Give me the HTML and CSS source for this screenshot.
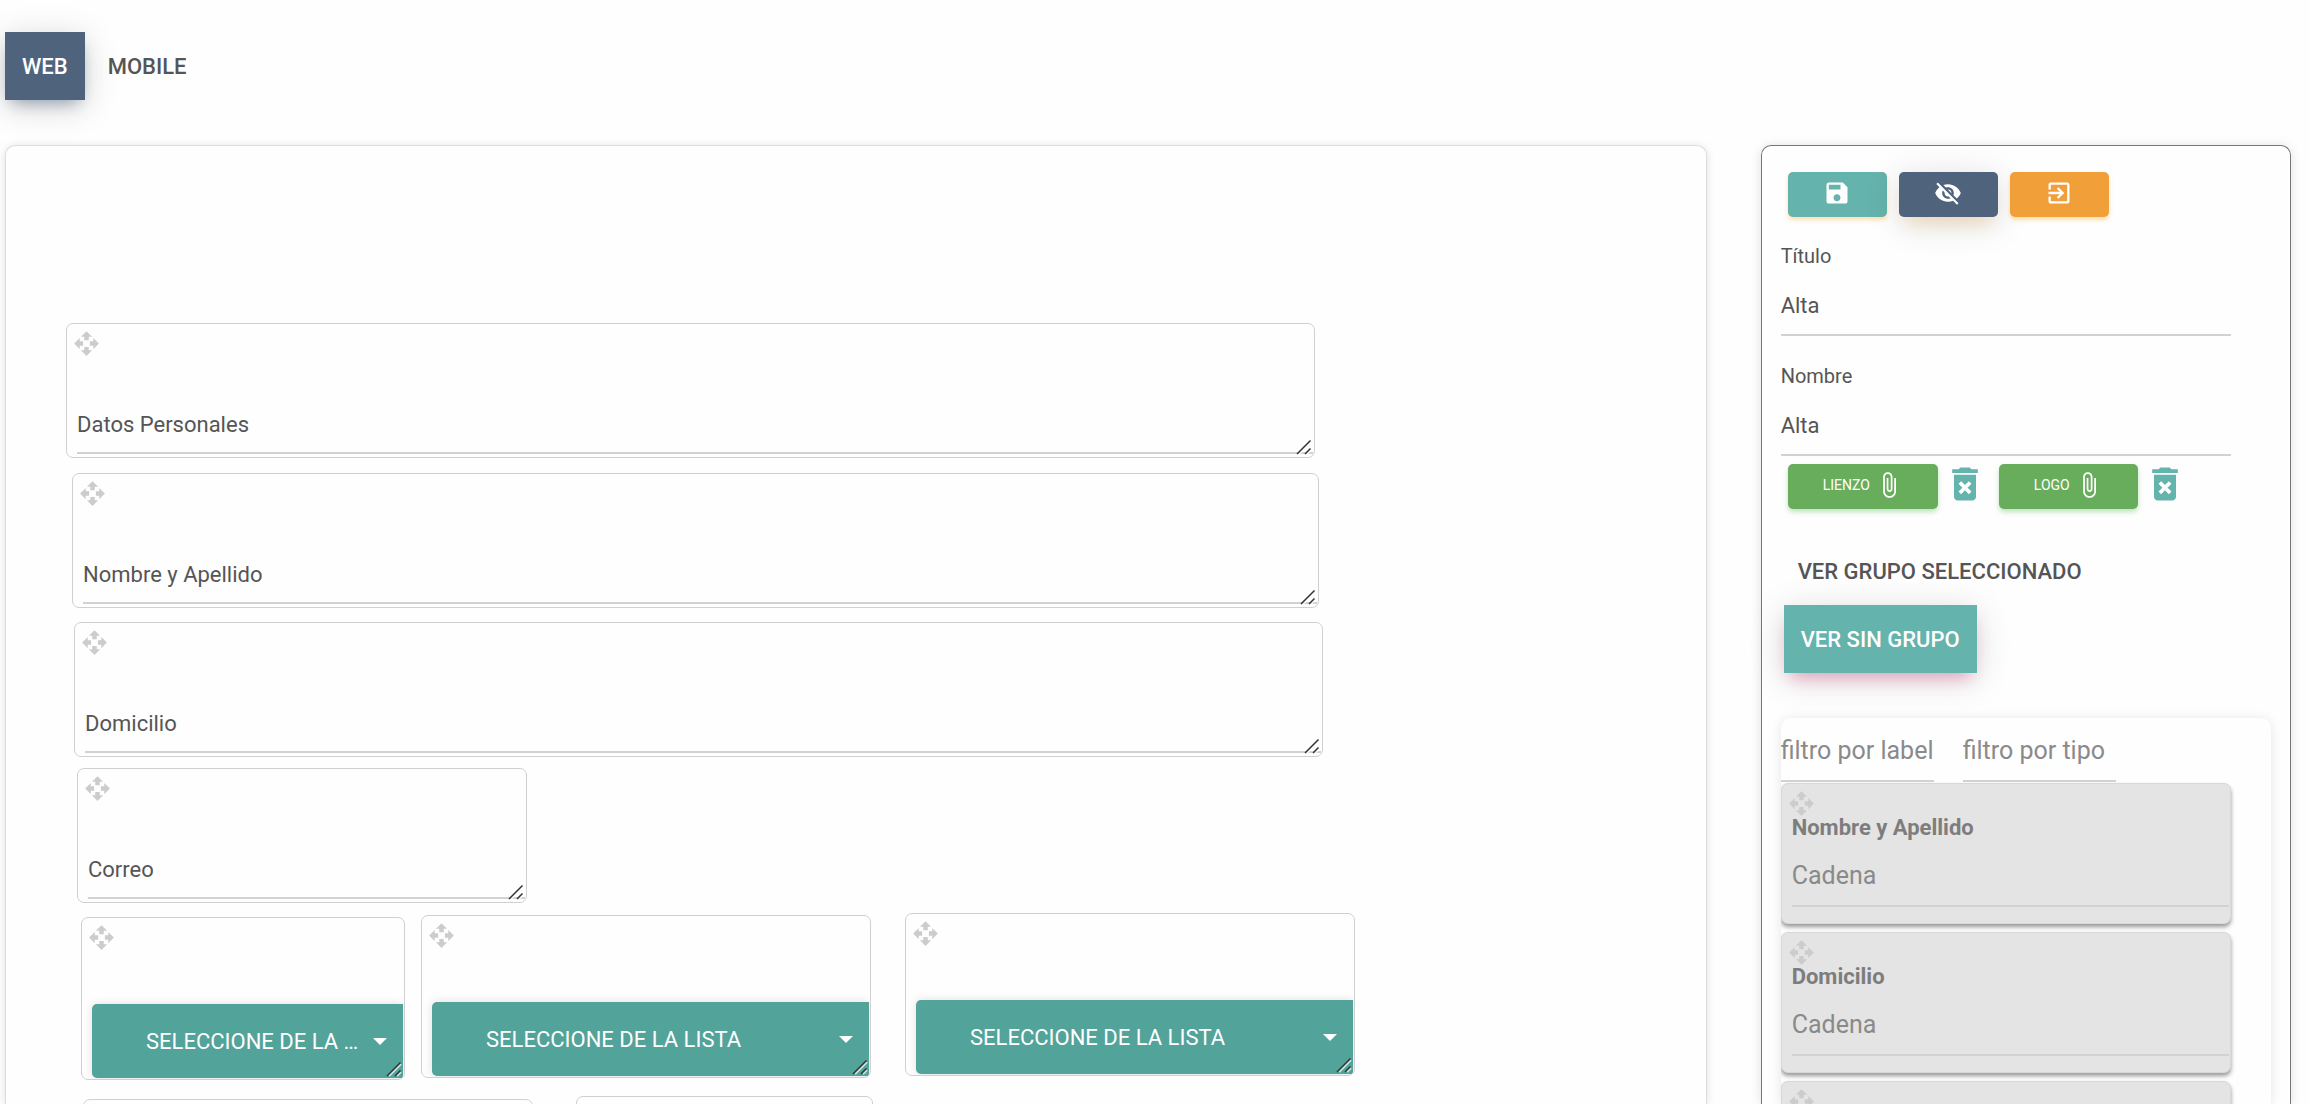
FILE: index.html
```html
<!DOCTYPE html>
<html lang="es">
<head>
    <meta charset="UTF-8">
    <meta name="viewport" content="width=device-width, initial-scale=1.0">
    <title>Editor de formulario</title>
    <link rel="stylesheet" href="styles.css">
</head>
<body>
    <!-- shared icons -->
    <svg class="sprite" aria-hidden="true">
        <symbol id="move" viewBox="0 0 24 24"><path d="M10 9h4V6h3l-5-5-5 5h3v3zm-1 1H6V7l-5 5 5 5v-3h3v-4zm14 2l-5-5v3h-3v4h3v3l5-5zm-9 3h-4v3H7l5 5 5-5h-3v-3z"/></symbol>
        <symbol id="clip" viewBox="0 0 24 24"><path d="M16.5 6v11.5c0 2.21-1.79 4-4 4s-4-1.79-4-4V5c0-1.38 1.12-2.5 2.5-2.5s2.5 1.12 2.5 2.5v10.5c0 .55-.45 1-1 1s-1-.45-1-1V6H10v9.500c0 1.38 1.12 2.500 2.500 2.500s2.500-1.120 2.500-2.500V5c0-2.210-1.790-4-4-4S7 2.790 7 5v12.500c0 3.040 2.460 5.500 5.500 5.500s5.500-2.460 5.500-5.500V6h-1.500z"/></symbol>
        <symbol id="trash" viewBox="0 0 24 24"><path d="M6 19c0 1.1.9 2 2 2h8c1.100 0 2-.9 2-2V7H6v12zm2.460-7.120l1.410-1.410L12 12.590l2.120-2.120 1.410 1.410L13.410 14l2.120 2.120-1.410 1.410L12 15.410l-2.120 2.120-1.410-1.410L10.590 14l-2.130-2.120zM15.500 4l-1-1h-5l-1 1H5v2h14V4z"/></symbol>
        <symbol id="grip" viewBox="0 0 16 16"><path class="grip-light" d="M3 15L15 3M11 15L15 11"/><path class="grip-dark" d="M1 15L14.500 1.500M9 15L14.500 9.500"/></symbol>
    </svg>

    <div class="tabs">
        <button class="tab tab-web">WEB</button>
        <button class="tab">MOBILE</button>
    </div>

    <div class="editor">
        <main class="canvas">
            <div class="item item-datos">
                <svg class="move"><use href="#move"/></svg>
                <input class="line-input" type="text" value="Datos Personales" aria-label="Datos Personales">
                <svg class="grip"><use href="#grip"/></svg>
            </div>
            <div class="item item-nombre">
                <svg class="move"><use href="#move"/></svg>
                <input class="line-input" type="text" value="Nombre y Apellido" aria-label="Nombre y Apellido">
                <svg class="grip"><use href="#grip"/></svg>
            </div>
            <div class="item item-domicilio">
                <svg class="move"><use href="#move"/></svg>
                <input class="line-input" type="text" value="Domicilio" aria-label="Domicilio">
                <svg class="grip"><use href="#grip"/></svg>
            </div>
            <div class="item item-correo">
                <svg class="move"><use href="#move"/></svg>
                <input class="line-input" type="text" value="Correo" aria-label="Correo">
                <svg class="grip"><use href="#grip"/></svg>
            </div>
            <div class="item item-lista item-lista1">
                <svg class="move"><use href="#move"/></svg>
                <select class="list-select" aria-label="Lista 1"><option>SELECCIONE DE LA LISTA</option></select>
                <svg class="caret" viewBox="0 0 14 7"><path d="M0 0h14L7 7z"/></svg>
                <svg class="grip"><use href="#grip"/></svg>
            </div>
            <div class="item item-lista item-lista2">
                <svg class="move"><use href="#move"/></svg>
                <select class="list-select" aria-label="Lista 2"><option>SELECCIONE DE LA LISTA</option></select>
                <svg class="caret" viewBox="0 0 14 7"><path d="M0 0h14L7 7z"/></svg>
                <svg class="grip"><use href="#grip"/></svg>
            </div>
            <div class="item item-lista item-lista3">
                <svg class="move"><use href="#move"/></svg>
                <select class="list-select" aria-label="Lista 3"><option>SELECCIONE DE LA LISTA</option></select>
                <svg class="caret" viewBox="0 0 14 7"><path d="M0 0h14L7 7z"/></svg>
                <svg class="grip"><use href="#grip"/></svg>
            </div>
            <div class="item item-extra1"></div>
            <div class="item item-extra2"></div>
        </main>

        <aside class="panel">
            <div class="actions">
                <button class="btn btn-save" aria-label="Guardar"><svg viewBox="0 0 24 24"><path d="M17 3H5c-1.110 0-2 .9-2 2v14c0 1.100.890 2 2 2h14c1.100 0 2-.9 2-2V7l-4-4zm-5 16c-1.660 0-3-1.340-3-3s1.340-3 3-3 3 1.340 3 3-1.340 3-3 3zm3-10H5V5h10v4z"/></svg></button>
                <button class="btn btn-hide" aria-label="Ocultar"><svg viewBox="0 0 24 24"><path d="M12 7c2.760 0 5 2.240 5 5 0 .650-.130 1.260-.360 1.830l2.920 2.920c1.510-1.260 2.700-2.890 3.430-4.750-1.730-4.390-6-7.500-11-7.500-1.400 0-2.740.250-3.980.700l2.160 2.160C10.740 7.130 11.350 7 12 7zM2 4.270l2.280 2.280.460.460C3.080 8.300 1.780 10.020 1 12c1.730 4.390 6 7.500 11 7.500 1.550 0 3.030-.300 4.380-.840l.420.420L19.730 22 21 20.730 3.270 3 2 4.270zM7.530 9.800l1.550 1.550c-.050.210-.080.430-.080.650 0 1.660 1.340 3 3 3 .220 0 .440-.030.650-.080l1.550 1.550c-.670.330-1.410.530-2.200.530-2.760 0-5-2.240-5-5 0-.790.200-1.530.530-2.200zm4.310-.780l3.150 3.150.020-.160c0-1.660-1.340-3-3-3l-.170.010z"/></svg></button>
                <button class="btn btn-exit" aria-label="Salir"><svg viewBox="0 0 24 24"><path d="M10.090 15.590L11.500 17l5-5-5-5-1.410 1.410L12.670 11H3v2h9.670l-2.580 2.590zM19 3H5c-1.110 0-2 .9-2 2v4h2V5h14v14H5v-4H3v4c0 1.100.890 2 2 2h14c1.100 0 2-.9 2-2V5c0-1.100-.9-2-2-2z"/></svg></button>
            </div>

            <label class="field-label" for="titulo">Título</label>
            <input class="line-input" type="text" id="titulo" value="Alta">
            <label class="field-label" for="nombre">Nombre</label>
            <input class="line-input" type="text" id="nombre" value="Alta">

            <div class="files">
                <button class="btn btn-file">LIENZO <svg><use href="#clip"/></svg></button>
                <button class="trash" aria-label="Borrar lienzo"><svg><use href="#trash"/></svg></button>
                <button class="btn btn-file">LOGO <svg><use href="#clip"/></svg></button>
                <button class="trash" aria-label="Borrar logo"><svg><use href="#trash"/></svg></button>
            </div>

            <div class="groups">
                <button class="tab">VER GRUPO SELECCIONADO</button>
                <button class="tab tab-group">VER SIN GRUPO</button>
            </div>

            <div class="list">
                <div class="filters">
                    <input class="line-input filter" type="text" placeholder="filtro por label" aria-label="filtro por label">
                    <input class="line-input filter" type="text" placeholder="filtro por tipo" aria-label="filtro por tipo">
                </div>
                <div class="card">
                    <svg class="move"><use href="#move"/></svg>
                    <label for="campo1">Nombre y Apellido</label>
                    <input class="line-input" type="text" id="campo1" placeholder="Cadena">
                </div>
                <div class="card">
                    <svg class="move"><use href="#move"/></svg>
                    <label for="campo2">Domicilio</label>
                    <input class="line-input" type="text" id="campo2" placeholder="Cadena">
                </div>
                <div class="card">
                    <svg class="move"><use href="#move"/></svg>
                </div>
            </div>
        </aside>
    </div>
</body>
</html>
```
FILE: styles.css
```css
*{
    box-sizing: border-box;
}
body{
    display: flex;
    flex-direction: column;
    height: 100vh;
    margin: 0;
    padding: 32px 19px 0 5px;
    overflow: hidden;
    background-color: #fefefe;
    color: #555;
    font-family: Roboto, sans-serif;
    font-size: 22px;
}
button, input, select{
    margin: 0;
    border: 0;
    border-radius: 0;
    font: inherit;
    color: inherit;
    background: none;
}
button{
    cursor: pointer;
}
svg{
    display: block;
    fill: currentColor;
}
.sprite{
    position: absolute;
    width: 0;
    height: 0;
}

/* tabs */
.tabs{
    display: flex;
    gap: 6px;
    margin-bottom: 45px;
}
.tab{
    height: 68px;
    padding: 0 17px;
    font-weight: 500;
    white-space: nowrap;
}
.tab-web{
    background-color: #4f637d;
    color: #fff;
    box-shadow: 0 8px 16px -6px rgba(79,99,125,.6), 0 6px 36px rgba(0,0,0,.14);
}
.tab-group{
    margin-left: 3px;
    background-color: #64b3ac;
    color: #fff;
    box-shadow: 0 10px 16px -6px rgba(216,27,96,.35), 0 6px 36px rgba(0,0,0,.14);
}

.editor{
    display: flex;
    flex: 1;
    gap: 54px;
    min-height: 0;
}

.canvas{
    position: relative;
    flex: 1;
    overflow: hidden;
    border: 1px solid #ddd;
    border-bottom: 0;
    border-radius: 10px 10px 0 0;
    box-shadow: 0 1px 8px rgba(0,0,0,.12);
}
.item{
    position: absolute;
    display: flex;
    flex-direction: column;
    justify-content: space-between;
    width: 450px;
    height: 135px;
    padding: 6px 1px 3px 10px;
    overflow: hidden;
    border: 1px solid #d0d0d0;
    border-radius: 7px;
}
.item-datos{ left: 60px; top: 177px; width: 1249px; }
.item-nombre{ left: 66px; top: 327px; width: 1247px; }
.item-domicilio{ left: 68px; top: 476px; width: 1249px; }
.item-correo{ left: 71px; top: 622px; }
.item-lista1{ left: 75px; top: 771px; width: 324px; }
.item-lista2{ left: 415px; top: 769px; }
.item-lista3{ left: 899px; top: 767px; }
.item-extra1{ left: 77px; top: 953px; }
.item-extra2{ left: 570px; top: 950px; width: 297px; }
.item-lista{
    height: 163px;
    padding-bottom: 1px;
}
.item .line-input{
    height: 58px;
}
.move{
    flex: none;
    width: 27px;
    height: 27px;
    margin-left: -4px;
    color: #ccc;
}
.grip{
    position: absolute;
    right: 2px;
    bottom: 2px;
    width: 16px;
    height: 16px;
    fill: none;
}
.grip-dark{
    stroke: #333;
    stroke-width: 1.5;
}
.grip-light{
    stroke: rgba(255,255,255,.7);
    stroke-width: 2;
}
.list-select{
    width: 100%;
    height: 74px;
    padding: 0 40px 0 54px;
    appearance: none;
    border-radius: 5px 0 0 5px;
    background-color: #52a399;
    box-shadow: 0 0 10px rgba(0,0,0,.12);
    color: #fff;
    text-overflow: ellipsis;
}
.caret{
    position: absolute;
    right: 17px;
    bottom: 34px;
    width: 14px;
    height: 7px;
    color: #fff;
    pointer-events: none;
}
.line-input{
    display: block;
    width: 100%;
    height: 60px;
    padding: 0;
    border-bottom: 2px solid #d2d2d2;
    outline: 0;
}
.line-input::placeholder{
    color: #8a8a8a;
    font-size: 25px;
}

/* right panel */
.panel{
    display: flex;
    flex-direction: column;
    width: 23.2%;
    padding: 26px 19px 0;
    border: 1px solid #777;
    border-bottom: 0;
    border-radius: 10px 10px 0 0;
    box-shadow: 0 1px 12px rgba(0,0,0,.12);
}
.panel > *{
    flex: none;
}
.panel > .line-input{
    width: 450px;
}
.actions, .files{
    display: flex;
    gap: 12px;
    padding-left: 7px;
}
.btn{
    display: flex;
    align-items: center;
    justify-content: center;
    width: 99px;
    height: 45px;
    padding: 0 0 4px;
    border-radius: 5px;
    color: #fff;
}
.btn svg{
    width: 28px;
    height: 28px;
}
.btn-save{
    background-color: #64b3ac;
    box-shadow: 0 3px 4px rgba(255,152,0,.3);
}
.btn-hide{
    background-color: #4f637d;
    box-shadow: 0 12px 16px -6px rgba(255,152,0,.2), 0 6px 36px rgba(0,0,0,.14);
}
.btn-exit{
    background-color: #f19f39;
    box-shadow: 0 3px 4px rgba(255,152,0,.3);
}
.field-label{
    height: 24px;
    margin-top: 27px;
    font-size: 20px;
    line-height: 24px;
}
.field-label + .line-input{
    margin-top: 8px;
}
.line-input + .field-label{
    margin-top: 28px;
}
.files{
    gap: 5px;
    margin-top: 8px;
}
.btn-file{
    gap: 5px;
    width: auto;
    padding: 0 35px 4px 35px;
    background-color: #68ad5c;
    box-shadow: 0 3px 5px rgba(76,175,80,.35);
    font-size: 14px;
}
.trash{
    display: flex;
    align-items: center;
    height: 40px;
    margin-right: 7px;
    padding: 0;
    color: #64b3ac;
}
.trash svg{
    width: 44px;
    height: 44px;
}
.groups{
    display: flex;
    flex-direction: column;
    align-items: flex-start;
    margin-top: 28px;
}
.panel .list{
    flex: 1;
    min-height: 0;
    margin-top: 45px;
    overflow: hidden;
    border-radius: 10px 10px 0 0;
    box-shadow: 0 1px 12px rgba(0,0,0,.1);
}
.filters{
    display: flex;
    gap: 29px;
    padding-top: 4px;
}
.filter{
    width: 153px;
}
.card{
    width: 450px;
    height: 141px;
    margin: 1px 0 8px;
    padding: 6px 1px 0 10px;
    border: 1px solid #d8d8d8;
    border-radius: 7px;
    background-color: #e4e4e4;
    box-shadow: 0 3px 4px rgba(0,0,0,.4);
}
.card label{
    display: block;
    height: 22px;
    margin-bottom: 8px;
    line-height: 22px;
    color: #7d7d7d;
    font-weight: 700;
}
```
